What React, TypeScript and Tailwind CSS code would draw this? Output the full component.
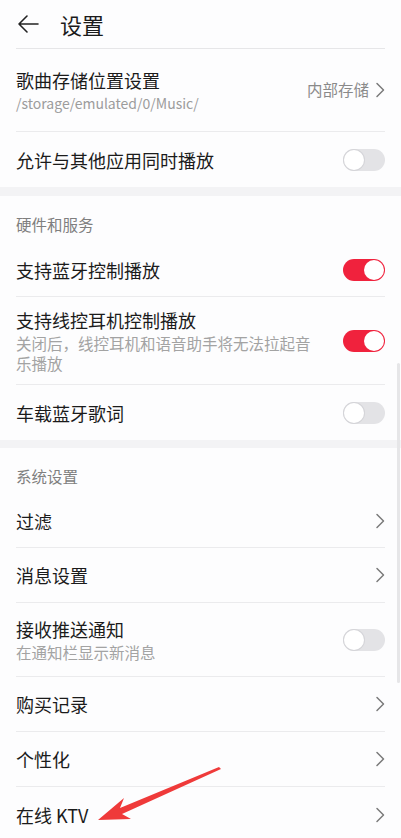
import React from "react";

const FONT = { fontFamily: '"Noto Sans CJK SC", "Noto Sans", Roboto, sans-serif' };

function Toggle({ on }: { on: boolean }) {
  return (
    <div
      className={
        "flex h-[22px] w-[42px] shrink-0 items-center rounded-full px-[1px] " +
        (on ? "justify-end bg-[#f0223d]" : "justify-start bg-[#e3e3e6]")
      }
    >
      <div
        className={
          "h-[20px] w-[20px] rounded-full bg-white " +
          (on ? "" : "shadow-[0_0_0_1px_#d4d4d8]")
        }
      />
    </div>
  );
}

function Chevron() {
  return (
    <svg width="10" height="16" viewBox="0 0 10 16" className="shrink-0">
      <path d="M2 1.5 L8.5 8 L2 14.5" fill="none" stroke="#7a7a7a" strokeWidth="1.5" strokeLinecap="round" strokeLinejoin="round" />
    </svg>
  );
}

type RowProps = {
  title: string;
  sub?: string;
  subMono?: boolean;
  right: React.ReactNode;
  h: string;
  divider?: boolean;
};

function Row({ title, sub, subMono, right, h, divider = true }: RowProps) {
  return (
    <div className={"mx-4 flex items-center justify-between gap-2 " + h + (divider ? " border-b border-[#ebebed]" : "")}>
      <div className="min-w-0 flex-1">
        <div className="text-[18px] leading-[24px] text-[#1b1b1b]">{title}</div>
        {sub && (
          <div
            className={
              subMono
                ? "mt-[1px] text-[14px] leading-[20px] text-[#9c9c9c]"
                : "mt-[1px] pr-4 text-[15.5px] leading-[20px] text-[#a3a3a3]"
            }
          >
            {sub}
          </div>
        )}
      </div>
      {right}
    </div>
  );
}

function Section({ label }: { label: string }) {
  return (
    <div className="flex h-[47px] items-end px-4 pb-[9px] text-[15.5px] leading-[20px] text-[#7f7f7f]">{label}</div>
  );
}

export default function App() {
  return (
    <div className="relative h-[838px] w-[401px] overflow-hidden bg-[#fdfdfe]" style={FONT}>
      <div className="mx-4 flex h-[49px] items-center gap-[20px] border-b border-[#e6e6e8]">
        <svg width="24" height="20" viewBox="0 0 24 20">
          <path d="M22 10 H3 M11 2 L3 10 L11 18" fill="none" stroke="#222" strokeWidth="1.6" strokeLinecap="round" strokeLinejoin="round" />
        </svg>
        <span className="text-[22px] leading-[28px] text-[#1b1b1b]">设置</span>
      </div>

      <Row
        h="h-[83px]"
        title="歌曲存储位置设置"
        sub="/storage/emulated/0/Music/"
        subMono
        right={
          <div className="flex items-center gap-[6px] text-[15.5px] text-[#8a8a8a]">
            内部存储
            <Chevron />
          </div>
        }
      />
      <Row h="h-[55px]" title="允许与其他应用同时播放" right={<Toggle on={false} />} divider={false} />

      <div className="h-[9px] bg-[#f3f3f5]" />
      <Section label="硬件和服务" />
      <Row h="h-[54px]" title="支持蓝牙控制播放" right={<Toggle on />} />
      <Row
        h="h-[88px]"
        title="支持线控耳机控制播放"
        sub="关闭后，线控耳机和语音助手将无法拉起音乐播放"
        right={<Toggle on />}
      />
      <Row h="h-[55px]" title="车载蓝牙歌词" right={<Toggle on={false} />} divider={false} />

      <div className="h-[8px] bg-[#f3f3f5]" />
      <Section label="系统设置" />
      <Row h="h-[53px]" title="过滤" right={<Chevron />} />
      <Row h="h-[55px]" title="消息设置" right={<Chevron />} />
      <Row h="h-[74px]" title="接收推送通知" sub="在通知栏显示新消息" right={<Toggle on={false} />} />
      <Row h="h-[55px]" title="购买记录" right={<Chevron />} />
      <Row h="h-[55px]" title="个性化" right={<Chevron />} />
      <Row h="h-[56px]" title="在线 KTV" right={<Chevron />} divider={false} />

      <div className="absolute right-[1px] top-[363px] h-[320px] w-[3px] rounded-full bg-[#e6e6e8]" />

      <svg className="pointer-events-none absolute left-0 top-0" width="401" height="838" viewBox="0 0 401 838">
        <path d="M219 767 L120 808 L124 798 L98 820 L131 819 L122 814 L221 769 Z" fill="#ef3a3a" />
      </svg>
    </div>
  );
}
